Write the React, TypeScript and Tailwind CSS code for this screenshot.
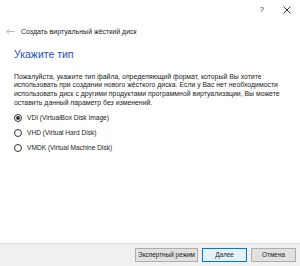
import React, { useState } from "react";

const App: React.FC = () => {
  const [format, setFormat] = useState<string>("vdi");

  const options = [
    { id: "vdi", label: "VDI (VirtualBox Disk Image)" },
    { id: "vhd", label: "VHD (Virtual Hard Disk)" },
    { id: "vmdk", label: "VMDK (Virtual Machine Disk)" },
  ];

  return (
    <div
      className="w-[300px] h-[266px] bg-white flex flex-col text-[#1a1a1a] overflow-hidden"
      style={{ fontFamily: '"Liberation Sans", Arial, sans-serif' }}
    >
      {/* Title bar */}
      <div className="h-[19px] flex items-center justify-end pr-[9px] gap-[19px] text-[#333]">
        <span className="text-[8px] leading-none mt-[1px]">?</span>
        <svg width="8" height="8" viewBox="0 0 8 8" className="mt-[1px]">
          <path d="M0.5 0.5 L7.5 7.5 M7.5 0.5 L0.5 7.5" stroke="#333" strokeWidth="1" />
        </svg>
      </div>

      {/* Header row */}
      <div className="h-[24px] flex items-center pl-[6px] gap-[6px]">
        <svg width="9" height="7" viewBox="0 0 9 7">
          <path d="M8.5 3.5 H1 M3.5 0.8 L0.8 3.5 L3.5 6.2" stroke="#b8b8b8" strokeWidth="1" fill="none" />
        </svg>
        <span className="text-[7px] leading-none">Создать виртуальный жёсткий диск</span>
      </div>

      <div className="flex-1 px-[14px]">
        <h1 className="text-[#1c4fb8] text-[10.5px] leading-none mt-[6px]">Укажите тип</h1>

        <p className="text-[6.9px] leading-[8.7px] mt-[13px] whitespace-nowrap">
          Пожалуйста, укажите тип файла, определяющий формат, который Вы хотите
          <br />
          использовать при создании нового жёсткого диска. Если у Вас нет необходимости
          <br />
          использовать диск с другими продуктами программной виртуализации, Вы можете
          <br />
          оставить данный параметр без изменений.
        </p>

        <div className="mt-[6px] flex flex-col gap-[6px]">
          {options.map((o) => (
            <label key={o.id} className="flex items-center gap-[5px] h-[9px] cursor-default">
              <span className="w-[8px] h-[8px] rounded-full border border-[#333] flex items-center justify-center bg-white">
                {format === o.id && <span className="w-[4px] h-[4px] rounded-full bg-[#333]" />}
              </span>
              <input
                type="radio"
                name="fmt"
                className="hidden"
                checked={format === o.id}
                onChange={() => setFormat(o.id)}
              />
              <span className="text-[6.6px] leading-none">{o.label}</span>
            </label>
          ))}
        </div>
      </div>

      {/* Footer */}
      <div className="h-[23px] bg-[#f0f0f0] border-t border-[#dfdfdf] flex items-center justify-end gap-[4px] pr-[4px]">
        <button className="h-[14px] w-[63px] bg-[#e1e1e1] border border-[#adadad] text-[6.4px] leading-none">
          Экспертный режим
        </button>
        <button className="h-[14px] w-[45px] bg-[#e5f1fb] border border-[#0078d7] text-[6.4px] leading-none">
          Далее
        </button>
        <button className="h-[14px] w-[45px] bg-[#e1e1e1] border border-[#adadad] text-[6.4px] leading-none">
          Отмена
        </button>
      </div>
    </div>
  );
};

export default App;
